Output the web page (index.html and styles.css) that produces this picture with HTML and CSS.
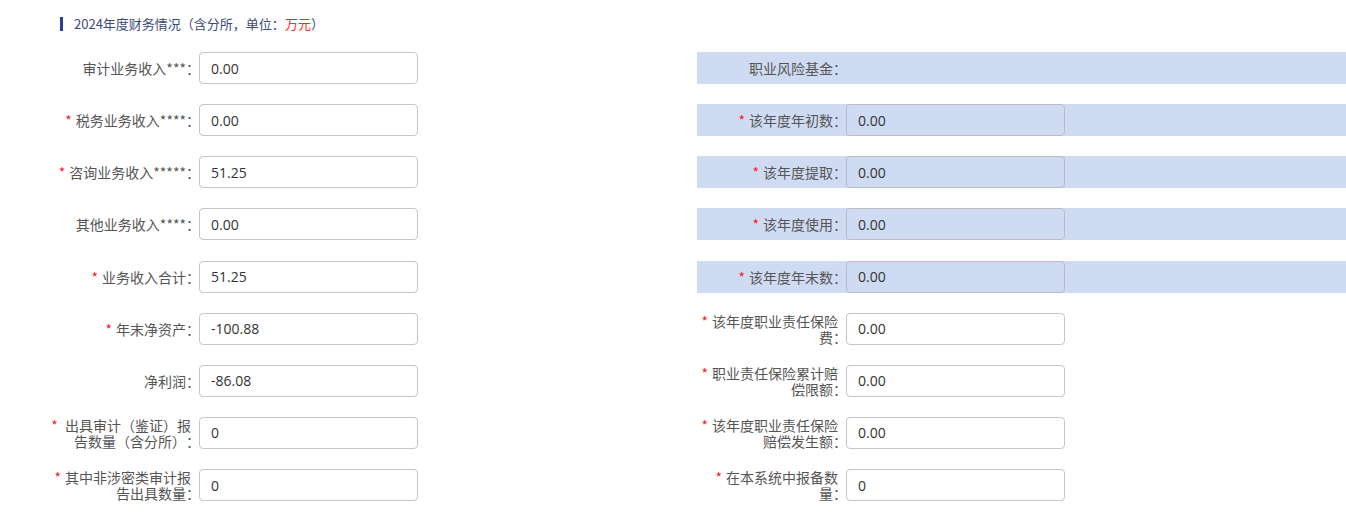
FILE: index.html
```html
<!DOCTYPE html>
<html lang="zh-CN">
<head>
<meta charset="utf-8">
<title>2024年度财务情况</title>
<link rel="stylesheet" href="styles.css">
</head>
<body>
<div class="page">
  <div class="title">2024年度财务情况（含分所，单位：<span class="red">万元</span>）</div>
  <div class="form">
    <div class="col">
      <div class="row"><label class="lbl">审计业务收入***</label><input class="ipt" value="0.00"></div>
      <div class="row"><label class="lbl"><span class="req">*</span>税务业务收入****</label><input class="ipt" value="0.00"></div>
      <div class="row"><label class="lbl"><span class="req">*</span>咨询业务收入*****</label><input class="ipt" value="51.25"></div>
      <div class="row"><label class="lbl">其他业务收入****</label><input class="ipt" value="0.00"></div>
      <div class="row"><label class="lbl"><span class="req">*</span>业务收入合计</label><input class="ipt" value="51.25"></div>
      <div class="row"><label class="lbl"><span class="req">*</span>年末净资产</label><input class="ipt" value="-100.88"></div>
      <div class="row"><label class="lbl">净利润</label><input class="ipt" value="-86.08"></div>
      <div class="row"><label class="lbl"><span class="req">*</span>&nbsp;出具审计（鉴证）报告数量（含分所）</label><input class="ipt" value="0"></div>
      <div class="row"><label class="lbl"><span class="req">*</span>其中非涉密类审计报告出具数量</label><input class="ipt" value="0"></div>
    </div>
    <div class="col">
      <div class="row band"><label class="lbl">职业风险基金</label></div>
      <div class="row band"><label class="lbl"><span class="req">*</span>该年度年初数</label><input class="ipt dis" value="0.00" disabled></div>
      <div class="row band"><label class="lbl"><span class="req">*</span>该年度提取</label><input class="ipt dis" value="0.00" disabled></div>
      <div class="row band"><label class="lbl"><span class="req">*</span>该年度使用</label><input class="ipt dis" value="0.00" disabled></div>
      <div class="row band"><label class="lbl"><span class="req">*</span>该年度年末数</label><input class="ipt dis" value="0.00" disabled></div>
      <div class="row"><label class="lbl"><span class="req">*</span>该年度职业责任保险费</label><input class="ipt" value="0.00"></div>
      <div class="row"><label class="lbl"><span class="req">*</span>职业责任保险累计赔偿限额</label><input class="ipt" value="0.00"></div>
      <div class="row"><label class="lbl"><span class="req">*</span>该年度职业责任保险赔偿发生额</label><input class="ipt" value="0.00"></div>
      <div class="row"><label class="lbl"><span class="req">*</span>在本系统中报备数量</label><input class="ipt" value="0"></div>
    </div>
  </div>
</div>
</body>
</html>
```

FILE: styles.css
```css
html, body {
  margin: 0;
  padding: 0;
  background: #fff;
}
body {
  font-family: "Noto Sans CJK SC", "Noto Sans", sans-serif;
  color: #555;
  text-spacing-trim: space-all;
}
.page {
  padding-top: 17px;
}
.title {
  margin-left: 60px;
  border-left: 3px solid #2b3d92;
  padding-left: 11px;
  height: 14px;
  line-height: 14px;
  font-size: 13px;
  color: #3b4a7c;
}
.red {
  color: #ff2a1a;
}
.form {
  display: grid;
  grid-template-columns: 647px 1fr;
  margin-top: 21px;
  padding-left: 50px;
}
.col {
  display: flex;
  flex-direction: column;
  gap: 20.125px;
}
.row {
  display: flex;
  align-items: center;
  height: 32px;
}
.band {
  background: #cfdbf2;
}
.lbl {
  box-sizing: border-box;
  width: 149px;
  padding-right: 8px;
  text-align: right;
  font-size: 14px;
  line-height: 16px;
  color: #555;
}
.lbl::after {
  content: "：";
  letter-spacing: -9px;
}
.req {
  color: #f5222d;
  margin-right: 4px;
}
.ipt {
  box-sizing: border-box;
  width: 219px;
  height: 32px;
  border: 1px solid #c6c6c6;
  border-radius: 4px;
  padding: 0 0 0 11px;
  margin: 0;
  font-family: "Open Sans", "Noto Sans", sans-serif;
  font-size: 14px;
  color: #333;
  background: #fff;
  outline: none;
}
.ipt.dis {
  background: transparent;
  border-color: #b9bcc4;
  color: #333;
}
```
